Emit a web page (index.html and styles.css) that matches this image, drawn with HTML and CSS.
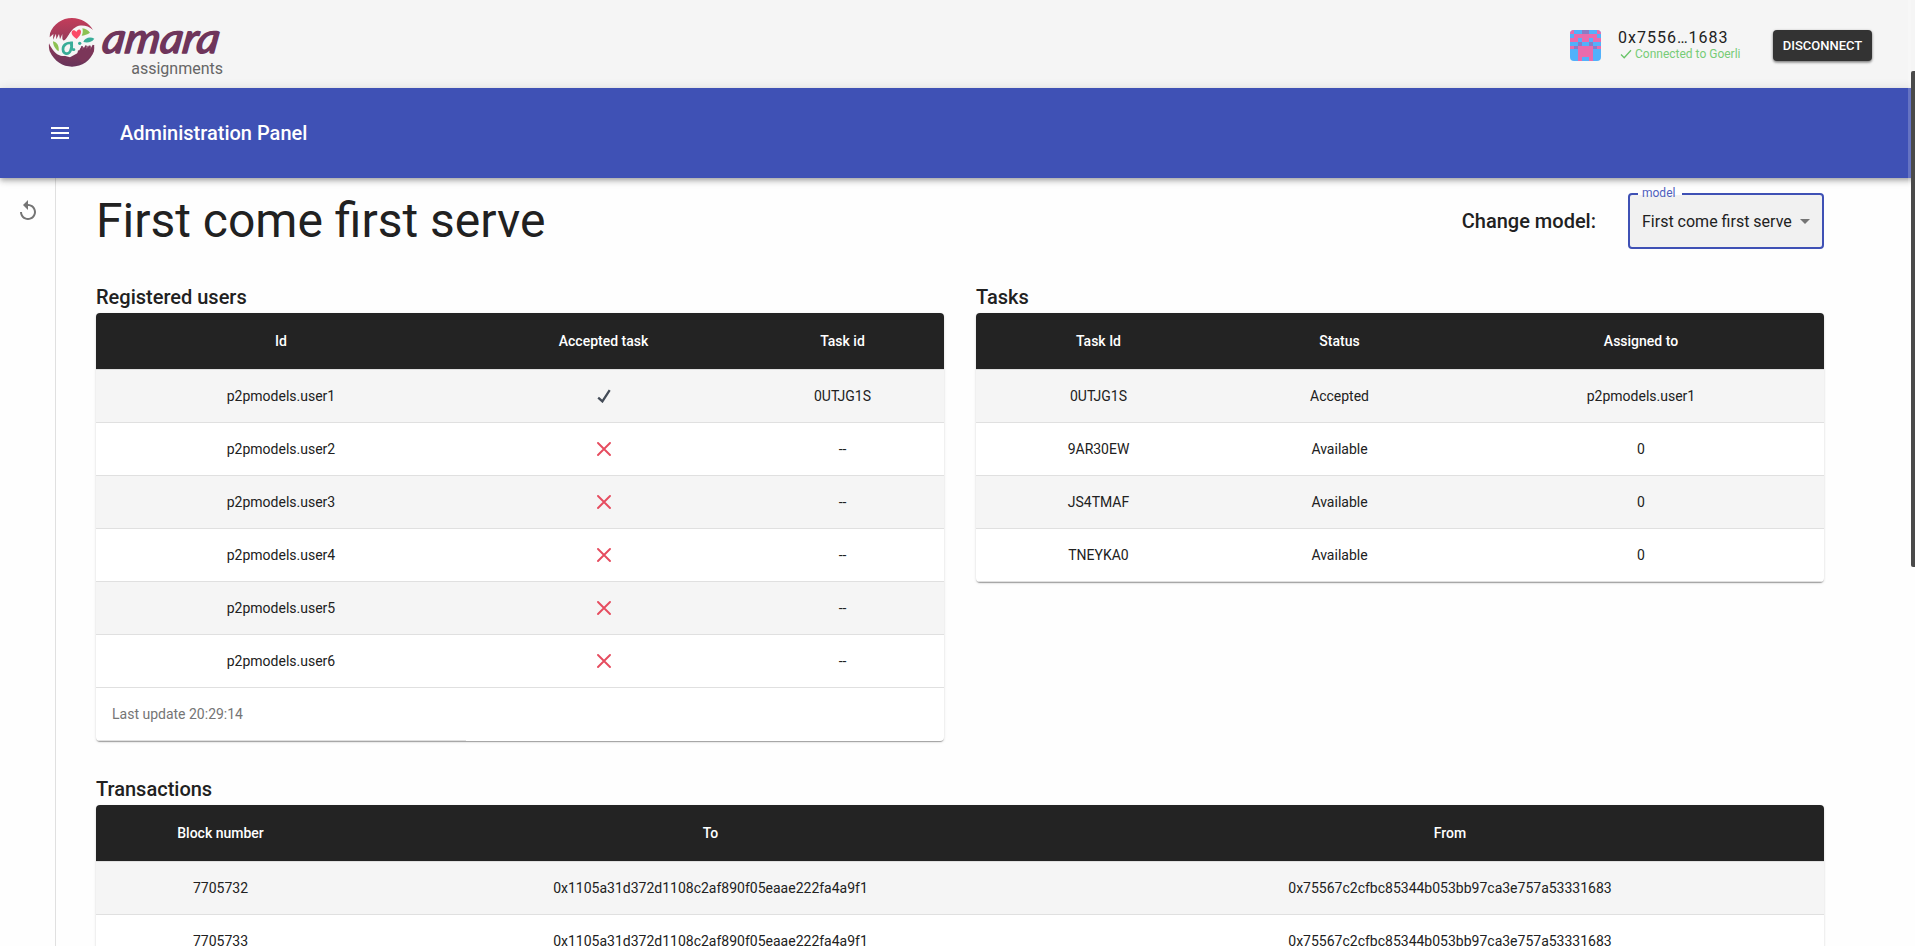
FILE: index.html
```html
<!DOCTYPE html>
<html lang="en">
<head>
<meta charset="utf-8">
<title>Amara assignments</title>
<link rel="stylesheet" href="styles.css">
</head>
<body>
<svg class="defs" width="0" height="0">
  <symbol id="check" viewBox="0 0 14 14"><path d="M1.2 8.6L5.4 12.4 12.7 1.2" fill="none" stroke="#444c58" stroke-width="2.3"/></symbol>
  <symbol id="cross" viewBox="0 0 14 14"><path d="M1 1L13 13M13 1L1 13" fill="none" stroke="#e64c5f" stroke-width="1.9" stroke-linecap="round"/></symbol>
</svg>
<header class="header">
  <div class="brand">
    <svg class="emblem" width="52" height="56" viewBox="0 0 156 168">
      <defs>
        <linearGradient id="top" x1="0" y1="0" x2="0" y2="1"><stop offset="0" stop-color="#c43c5a"/><stop offset="1" stop-color="#963a59"/></linearGradient>
        <linearGradient id="low" x1="0" y1="0" x2="0" y2="1"><stop offset="0" stop-color="#67345a"/><stop offset="1" stop-color="#8d3958"/></linearGradient>
      </defs>
      <path fill="url(#top)" d="M12 58C22 30 48 12 78 12C106 12 130 27 141 48C126 34 104 31 90 39C78 46 72 55 68 66C63 80 52 84 49 74L49 60L42 76L39 60L31 76L30 59L21 77L22 60L11 70Z"/>
      <path fill="url(#low)" transform="rotate(180 78 85)" d="M12 58C22 30 48 12 78 12C106 12 130 27 145 58C147 66 148 74 147 82C138 62 126 48 112 45C100 42 88 46 82 54C76 62 74 70 68 76C60 84 52 84 49 74L49 60L42 76L39 60L31 76L30 59L21 77L22 60L11 70Z"/>
      <path fill="#f5f5f5" d="M18 78C28 84 44 84 54 80C66 72 70 52 90 42C108 36 128 42 140 62L146 78L120 98L104 102L94 118L72 130L44 122L24 106Z"/>
      <path fill="#7b3659" d="M93 130L96 108L101 112L106 96L111 97L110 111L118 94L123 95L119 111L129 94L133 96L130 111L140 92L145 94C144 116 130 136 108 146Z"/>
      <path fill="#fb4a66" d="M92 75C82 68 75 61 77 54C79 47 87 47 91 54C94 45 103 44 105 52C106 60 100 68 92 75Z"/>
      <path fill="#8cc152" d="M109 43C119 44 127 49 132 56C124 61 115 64 107 65C111 58 111 50 109 43Z"/>
      <path fill="#8cc152" d="M21 82C32 84 40 94 38 112C28 106 21 95 21 82Z"/>
      <path fill="#38ad98" d="M112 84C116 70 134 67 145 74C139 83 126 88 112 84Z"/>
      <path fill="none" stroke="#38ad98" stroke-width="8" stroke-linecap="round" d="M75 88C63 84 50 94 51 107C52 121 67 123 73 111C77 103 79 95 77 83C75 96 76 109 84 107"/>
      <circle cx="101" cy="88" r="5" fill="#38ad98"/>
    </svg>
    <div class="names">
      <svg class="wordmark" width="124" height="32" viewBox="0 0 124 32">
        <text transform="translate(2 26) skewX(-8)" textLength="117" lengthAdjust="spacingAndGlyphs">amara</text>
      </svg>
      <span class="product">assignments</span>
    </div>
  </div>
  <div class="account">
    <svg class="avatar" width="31" height="31" viewBox="0 0 8 8" preserveAspectRatio="none" shape-rendering="crispEdges">
      <path fill="#52b1fb" d="M0 0h8v8H0z"/>
      <path fill="#e96bac" d="M0 0h1v1H0zM7 0h1v1H7zM1 1h6v1H1zM0 2h2v1H0zM3 2h2v1H3zM6 2h2v1H6zM0 4h1v1H0zM7 4h1v1H7zM2 4h4v3H2zM2 7h1v1H2zM5 7h1v1H5z"/>
      <path fill="#8c7bc4" d="M3 0h2v1H3zM2 3h1v1H2zM5 3h1v1H5zM1 4h1v1H1zM6 4h1v1H6z"/>
    </svg>
    <div class="wallet">
      <div class="address">0x7556…1683</div>
      <div class="status"><svg width="12" height="10" viewBox="0 0 12 10"><path d="M1 5.5L4.2 8.7 11 1.2" fill="none" stroke="#68c468" stroke-width="1.3"/></svg>Connected to Goerli</div>
    </div>
    <button class="disconnect">DISCONNECT</button>
  </div>
</header>
<nav class="appbar">
  <svg width="24" height="24" viewBox="0 0 24 24"><path fill="#fff" d="M3 18h18v-2H3v2zm0-5h18v-2H3v2zm0-7v2h18V6H3z"/></svg>
  <span class="appbar-title">Administration Panel</span>
</nav>
<div class="shell">
  <aside class="rail">
    <svg width="24" height="24" viewBox="0 0 24 24"><path fill="#757575" d="M12 5V1L7 6l5 5V7c3.31 0 6 2.69 6 6s-2.69 6-6 6-6-2.69-6-6H4c0 4.42 3.58 8 8 8s8-3.58 8-8-3.58-8-8-8z"/></svg>
  </aside>
  <main class="content">
    <div class="topline">
      <h1>First come first serve</h1>
      <div class="chooser">
        <h2>Change model:</h2>
        <div class="select">
          <span class="select-label">model</span>
          <span>First come first serve</span>
          <svg width="24" height="24" viewBox="0 0 24 24"><path fill="#757575" d="M7 10l5 5 5-5z"/></svg>
        </div>
      </div>
    </div>
    <div class="tables">
      <section>
        <h2>Registered users</h2>
        <table class="card">
          <colgroup><col class="u1"><col class="u2"><col class="u3"></colgroup>
          <thead><tr><th>Id</th><th>Accepted task</th><th>Task id</th></tr></thead>
          <tbody>
            <tr><td>p2pmodels.user1</td><td><svg class="mark"><use href="#check"/></svg></td><td>0UTJG1S</td></tr>
            <tr><td>p2pmodels.user2</td><td><svg class="mark"><use href="#cross"/></svg></td><td>--</td></tr>
            <tr><td>p2pmodels.user3</td><td><svg class="mark"><use href="#cross"/></svg></td><td>--</td></tr>
            <tr><td>p2pmodels.user4</td><td><svg class="mark"><use href="#cross"/></svg></td><td>--</td></tr>
            <tr><td>p2pmodels.user5</td><td><svg class="mark"><use href="#cross"/></svg></td><td>--</td></tr>
            <tr><td>p2pmodels.user6</td><td><svg class="mark"><use href="#cross"/></svg></td><td>--</td></tr>
          </tbody>
          <tfoot><tr><td>Last update 20:29:14</td></tr></tfoot>
        </table>
      </section>
      <section>
        <h2>Tasks</h2>
        <table class="card">
          <colgroup><col class="t1"><col class="t2"><col class="t3"></colgroup>
          <thead><tr><th>Task Id</th><th>Status</th><th>Assigned to</th></tr></thead>
          <tbody>
            <tr><td>0UTJG1S</td><td>Accepted</td><td>p2pmodels.user1</td></tr>
            <tr><td>9AR30EW</td><td>Available</td><td>0</td></tr>
            <tr><td>JS4TMAF</td><td>Available</td><td>0</td></tr>
            <tr><td>TNEYKA0</td><td>Available</td><td>0</td></tr>
          </tbody>
        </table>
      </section>
      <section class="wide">
        <h2>Transactions</h2>
        <table class="card">
          <colgroup><col class="x1"><col class="x2"><col class="x3"></colgroup>
          <thead><tr><th>Block number</th><th>To</th><th>From</th></tr></thead>
          <tbody>
            <tr><td>7705732</td><td>0x1105a31d372d1108c2af890f05eaae222fa4a9f1</td><td>0x75567c2cfbc85344b053bb97ca3e757a53331683</td></tr>
            <tr><td>7705733</td><td>0x1105a31d372d1108c2af890f05eaae222fa4a9f1</td><td>0x75567c2cfbc85344b053bb97ca3e757a53331683</td></tr>
          </tbody>
        </table>
      </section>
    </div>
  </main>
</div>
<div class="scroll-track"></div>
<div class="scroll-thumb"></div>
</body>
</html>
```
FILE: styles.css
```css
* { box-sizing: border-box; }
body {
  margin: 0;
  height: 946px;
  overflow: hidden;
  display: flex;
  flex-direction: column;
  position: relative;
  background: #fefefe;
  color: #212121;
  font-family: Roboto, "Liberation Sans", sans-serif;
}
svg { flex: none; }
.defs { position: absolute; }

.header {
  height: 88px;
  flex: none;
  display: flex;
  justify-content: space-between;
  align-items: flex-start;
  padding: 0 43px 0 46px;
  background: #f5f5f5;
}
.brand { display: flex; align-items: flex-start; padding-top: 14px; }
.names { display: flex; flex-direction: column; align-items: flex-end; padding: 13px 0 0 1px; }
.wordmark { display: block; overflow: visible; }
.wordmark text {
  font: italic 400 42px Lato, "Liberation Serif", serif;
  fill: #6f355b;
  stroke: #6f355b;
  stroke-width: 1.6px;
  stroke-linejoin: round;
}
.product { font-size: 16px; line-height: 20px; color: #666; }

.account { display: flex; padding-top: 28px; }
.avatar { border-radius: 4px; margin-top: 2px; }
.wallet { width: 155px; margin-left: 17px; }
.address { font-size: 16px; line-height: 19px; letter-spacing: 1px; }
.status { display: flex; align-items: center; gap: 3px; padding-left: 2px; font-size: 12px; line-height: 14px; color: #7c7; }
.disconnect {
  width: 99px;
  height: 31px;
  margin-top: 2px;
  padding: 0;
  border: 0;
  border-radius: 4px;
  background: #333;
  color: #fff;
  font: 500 13px Roboto, sans-serif;
  box-shadow: 0 1px 3px rgba(0,0,0,.45), 0 2px 2px rgba(0,0,0,.15);
}

.appbar {
  height: 90px;
  flex: none;
  display: flex;
  align-items: center;
  gap: 48px;
  padding-left: 48px;
  position: relative;
  z-index: 1;
  background: #3f51b5;
  color: #fff;
  box-shadow: 0 2px 4px -1px rgba(0,0,0,.2), 0 4px 5px rgba(0,0,0,.14), 0 1px 10px rgba(0,0,0,.12);
}
.appbar-title { font-size: 20px; font-weight: 500; }

.shell { flex: 1; display: flex; min-height: 0; }
.rail { width: 56px; flex: none; border-right: 1px solid #e0e0e0; padding: 21px 0 0 16px; }
.content { width: 1770px; padding: 15px 0 0 40px; overflow: hidden; }
.topline { width: 1728px; height: 56px; display: flex; justify-content: space-between; align-items: center; }
h1 { margin: 0; font-size: 48px; font-weight: 400; line-height: 56px; }
h2 { margin: 0; font-size: 20px; font-weight: 500; line-height: 32px; }
.chooser { display: flex; align-items: center; gap: 32px; }
.select {
  width: 196px;
  height: 56px;
  display: flex;
  align-items: center;
  justify-content: space-between;
  position: relative;
  padding: 0 5px 0 12px;
  border: 2px solid #3f51b5;
  border-radius: 4px;
  background: #f1f1f1;
  font-size: 16px;
  white-space: nowrap;
}
.select-label {
  position: absolute;
  left: 8px;
  top: -9px;
  width: 44px;
  padding-left: 4px;
  background: linear-gradient(#fefefe 9px, #f1f1f1 9px);
  color: #4f60bd;
  font-size: 12px;
  line-height: 14px;
}

.tables { width: 1728px; display: grid; grid-template-columns: 848px 848px; gap: 32px; padding-top: 32px; align-items: start; }
.wide { grid-column: span 2; }
.card {
  width: 100%;
  table-layout: fixed;
  border-collapse: separate;
  border-spacing: 0;
  border-radius: 4px;
  overflow: hidden;
  background: #fff;
  font-size: 14px;
  text-align: center;
  box-shadow: 0 2px 1px -1px rgba(0,0,0,.2), 0 1px 1px rgba(0,0,0,.14), 0 1px 3px rgba(0,0,0,.12);
}
th { height: 57px; padding: 0; background: #232323; background-clip: padding-box; color: #fff; font-weight: 500; border-bottom: 1px solid #e0e0e0; }
td { height: 53px; padding: 0; border-bottom: 1px solid #e0e0e0; }
tbody tr:nth-child(odd) { background: #f5f5f5; }
tfoot td { padding-left: 16px; text-align: left; color: #757575; }
.u1 { width: 370px; } .u2 { width: 275px; }
.t1 { width: 245px; } .t2 { width: 237px; }
.x1 { width: 249px; } .x2 { width: 731px; }
.mark { display: block; width: 14px; height: 14px; margin: auto; }

.scroll-track { position: absolute; right: 4px; top: 0; width: 3px; height: 946px; z-index: 2; background: rgba(255,255,255,.2); }
.scroll-thumb { position: absolute; right: 0; top: 71px; width: 4px; height: 496px; z-index: 2; background: #4a4a4a; border-radius: 2px 0 0 2px; }
```
